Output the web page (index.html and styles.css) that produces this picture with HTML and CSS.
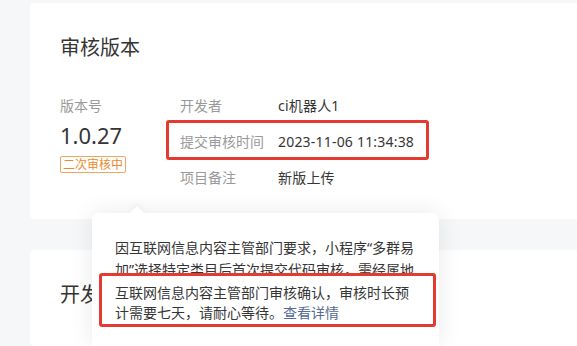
FILE: index.html
```html
<html>
    <head>
        <meta charset="utf-8">
        <link rel="stylesheet" href="styles.css">
    </head>
    <body>

    <div id="content">
        <div class="card card-review">
            <h2 class="card-title">审核版本</h2>
            <div class="version-wrapper">
                <div class="version-main">
                    <div class="label">版本号</div>
                    <div class="version-number">1.0.27</div>
                    <span class="badge">二次审核中</span>
                </div>
                <div class="version-info">
                    <div class="info-row">
                        <span class="label info-label">开发者</span>
                        <span class="info-value">ci机器人1</span>
                    </div>
                    <div class="info-row marked">
                        <span class="label info-label">提交审核时间</span>
                        <span class="info-value">2023-11-06 11:34:38</span>
                    </div>
                    <div class="info-row">
                        <span class="label info-label">项目备注</span>
                        <span class="info-value">新版上传</span>
                    </div>
                </div>
            </div>
        </div>

        <div class="card card-dev">
            <h2 class="card-title">开发版本</h2>
        </div>
    </div>

    <div id="popover">
        <div class="popover-arrow"></div>
        <p class="popover-text">因互联网信息内容主管部门要求，小程序“多群易加”选择特定类目后首次提交代码审核，需经属地网信部门备案后方可发布上线。</p>
        <div class="popover-mark">
            互联网信息内容主管部门审核确认，审核时长预计需要七天，请耐心等待。<a href="#">查看详情</a>
        </div>
    </div>

    </body>
</html>
```

FILE: styles.css
```css
body {
    margin: 0;
    font-family: "Noto Sans", "Noto Sans CJK SC", sans-serif;
    background-color: #f6f7f9;
    color: #353535;
    font-size: 14px;
    overflow: hidden;
    width: 577px;
    height: 346px;
    position: relative;
}

#content {
    padding: 3px 0 0 30px;
    margin-right: -20px;
}

.card {
    background-color: white;
    border-radius: 4px;
    padding: 31px 30px 0 30px;
    box-sizing: border-box;
}
.card-review {
    height: 216px;
    margin-bottom: 31px;
}
.card-dev {
    height: 96px;
}

.card-title {
    margin: 0;
    font-size: 20px;
    line-height: 28px;
    font-weight: normal;
}

.version-wrapper {
    display: flex;
    margin-top: 26px;
}

.label {
    color: #9a9a9a;
}

.version-main {
    width: 120px;
    line-height: 36px;
}
.version-number {
    font-size: 22px;
    line-height: 22px;
}
.badge {
    display: inline-block;
    margin-top: 10px;
    padding: 0 2px;
    font-size: 12px;
    line-height: 15px;
    color: #e98a2c;
    border: 1px solid #f2a65d;
    border-radius: 2px;
}

.info-row {
    display: flex;
    line-height: 36px;
    position: relative;
}
.info-label {
    width: 98px;
}
.info-value {
    letter-spacing: 0.2px;
}
.info-row.marked::after {
    content: "";
    position: absolute;
    left: -14px;
    top: -4px;
    width: 263px;
    height: 40px;
    box-sizing: border-box;
    border: 3px solid #e53a2f;
    border-radius: 3px;
}

#popover {
    position: absolute;
    left: 92px;
    top: 213px;
    width: 347px;
    height: 133px;
    background-color: white;
    border-radius: 7px 7px 0 0;
    box-shadow: 0 0 24px rgba(0, 0, 0, 0.09);
    box-sizing: border-box;
    padding: 24px 23px 0 23px;
}
.popover-arrow {
    position: absolute;
    left: 40px;
    top: -5px;
    width: 10px;
    height: 10px;
    background-color: white;
    transform: rotate(45deg);
    box-shadow: -3px -3px 6px rgba(0, 0, 0, 0.04);
}
.popover-text {
    margin: 0;
    line-height: 22px;
    height: 44px;
    overflow: hidden;
}
.popover-mark {
    position: absolute;
    left: 7px;
    top: 60px;
    width: 337px;
    height: 54px;
    box-sizing: border-box;
    padding: 7px 20px 0 13px;
    background-color: white;
    border: 3px solid #e53a2f;
    border-radius: 3px;
    line-height: 20px;
}
.popover-mark a {
    color: #576b95;
    text-decoration: none;
}
```
